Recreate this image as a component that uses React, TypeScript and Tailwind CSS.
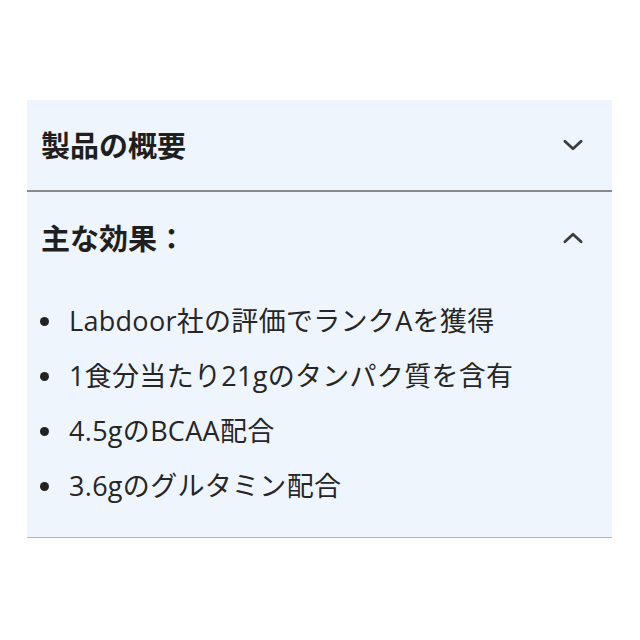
import React from 'react';

const font = { fontFamily: '"Noto Sans CJK JP", "Noto Sans", sans-serif' };
const listFont = { fontFamily: '"Open Sans", "Noto Sans CJK JP", sans-serif' };

function Chevron({ up }: { up?: boolean }) {
    return (
        <svg width="26" height="26" viewBox="0 0 24 24" fill="none" stroke="#3d3d3d" strokeWidth="2.6" strokeLinecap="round" strokeLinejoin="round">
            {up ? <path d="M4.5 15.5l7.5-7 7.5 7" /> : <path d="M4.5 8.5l7.5 7 7.5-7" />}
        </svg>
    );
}

const items = [
    'Labdoor社の評価でランクAを獲得',
    '1食分当たり21gのタンパク質を含有',
    '4.5gのBCAA配合',
    '3.6gのグルタミン配合',
];

export default function App() {
    return (
        <div className="w-[640px] h-[640px] bg-white pt-[100px]" style={font}>
            <div className="ml-[27px] w-[585px] bg-[#eff5fc]">
                {/* Overview */}
                <div className="h-[92px] flex items-center justify-between pl-[14px] pr-[26px] border-b-2 border-[#8a8a8a]">
                    <h2 className="text-[29px] font-bold text-[#1f1f1f]">製品の概要</h2>
                    <Chevron />
                </div>

                {/* Benefits */}
                <div className="border-b border-[#b5b5b5]">
                    <div className="h-[92px] flex items-center justify-between pl-[14px] pr-[26px]">
                        <h2 className="text-[29px] font-bold text-[#1f1f1f]">主な効果：</h2>
                        <Chevron up />
                    </div>
                    <ul className="pt-[10px] pb-[23px] pl-[13px]" style={listFont}>
                        {items.map((t) => (
                            <li key={t} className="h-[55px] flex items-center text-[27px] tracking-[0.3px] text-[#262626]">
                                <span className="w-[9px] h-[9px] rounded-full bg-[#222] mr-[20px] shrink-0" />
                                {t}
                            </li>
                        ))}
                    </ul>
                </div>
            </div>
        </div>
    );
}
